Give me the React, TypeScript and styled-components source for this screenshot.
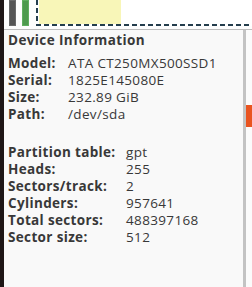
import React from "react";
import styled, { createGlobalStyle } from "styled-components";

const Global = createGlobalStyle`
  html, body { margin: 0; padding: 0; background: #1e1616; }
  body { width: 252px; height: 287px; overflow: hidden; }
`;

const Frame = styled.div`
  display: flex;
  width: 252px;
  height: 287px;
  background: #1e1616;
  font-family: "Open Sans", "Liberation Sans", sans-serif;
  color: #383838;
`;

const DarkEdge = styled.div`
  width: 4px;
  flex: none;
  background: #1e1616;
`;

const Main = styled.div`
  flex: 1;
  display: flex;
  flex-direction: column;
  min-width: 0;
`;

const TopStrip = styled.div`
  height: 30px;
  flex: none;
  display: flex;
  align-items: flex-start;
  background: #fdfdfd;
  border-bottom: 1px solid #bdbdbd;
  padding-left: 5px;
  gap: 6px;
  box-sizing: border-box;
`;

const Bar = styled.div<{ $fill: string; $edge: string }>`
  width: 7px;
  height: 26px;
  box-sizing: border-box;
  background: ${(p) => p.$fill};
  border: 1px solid ${(p) => p.$edge};
  flex: none;
`;

const DashedBox = styled.div`
  flex: 1;
  height: 26px;
  margin-left: 1px;
  display: flex;
  flex-direction: column;
  background: #ffffff;
`;

const BoxInner = styled.div`
  flex: 1;
  display: flex;
  gap: 1px;
`;

const DashV = styled.div`
  width: 2px;
  flex: none;
  background-color: #ffffff;
  background-image: linear-gradient(to bottom, #233d4c 0 5px, #ffffff 5px 8px);
  background-size: 2px 8px;
  background-repeat: repeat-y;
`;

const DashH = styled.div`
  height: 2px;
  flex: none;
  background-color: #ffffff;
  background-image: linear-gradient(to right, #233d4c 0 5px, #ffffff 5px 8px);
  background-size: 8px 2px;
  background-repeat: repeat-x;
`;

const UsedFill = styled.div`
  width: 82px;
  background: #f8f6b8;
`;

const Body = styled.div`
  flex: 1;
  display: flex;
  min-height: 0;
`;

const Panel = styled.div`
  flex: 1;
  background: #f9f9f9;
  border-right: 3px solid #c3c3c3;
  padding: 2px 0 0 4px;
  box-sizing: border-box;
  display: flex;
  flex-direction: column;
`;

const Side = styled.div`
  width: 6px;
  flex: none;
  background: #fbfbfb;
  display: flex;
  flex-direction: column;
  padding-top: 75px;
`;

const Marker = styled.div`
  height: 22px;
  background: #e95420;
`;

const Heading = styled.div`
  font-weight: 700;
  font-size: 13.5px;
  letter-spacing: 0.4px;
  line-height: 17px;
  white-space: nowrap;
  margin-bottom: 5.5px;
`;

const InfoGrid = styled.div<{ $labelWidth: number; $mt: number }>`
  display: grid;
  grid-template-columns: ${(p) => p.$labelWidth}px auto;
  font-size: 13.5px;
  letter-spacing: 0.35px;
  line-height: 17px;
  margin-top: ${(p) => p.$mt}px;
  white-space: nowrap;
`;

const Label = styled.div`
  font-weight: 700;
`;

const Value = styled.div`
  font-weight: 400;
`;

const deviceRows: [string, string][] = [
  ["Model:", "ATA CT250MX500SSD1"],
  ["Serial:", "1825E145080E"],
  ["Size:", "232.89 GiB"],
  ["Path:", "/dev/sda"],
];

const geometryRows: [string, string][] = [
  ["Partition table:", "gpt"],
  ["Heads:", "255"],
  ["Sectors/track:", "2"],
  ["Cylinders:", "957641"],
  ["Total sectors:", "488397168"],
  ["Sector size:", "512"],
];

export default function App() {
  return (
    <>
      <Global />
      <Frame>
        <DarkEdge />
        <Main>
          <TopStrip>
            <Bar $fill="#555555" $edge="#6a6a6a" />
            <Bar $fill="#4e9a4e" $edge="#5fae5f" />
            <DashedBox>
              <BoxInner>
                <DashV />
                <UsedFill />
              </BoxInner>
              <DashH />
            </DashedBox>
          </TopStrip>
          <Body>
            <Panel>
              <Heading>Device Information</Heading>
              <InfoGrid $labelWidth={60} $mt={0}>
                {deviceRows.map(([l, v]) => (
                  <React.Fragment key={l}>
                    <Label>{l}</Label>
                    <Value>{v}</Value>
                  </React.Fragment>
                ))}
              </InfoGrid>
              <InfoGrid $labelWidth={118} $mt={21.5}>
                {geometryRows.map(([l, v]) => (
                  <React.Fragment key={l}>
                    <Label>{l}</Label>
                    <Value>{v}</Value>
                  </React.Fragment>
                ))}
              </InfoGrid>
            </Panel>
            <Side>
              <Marker />
            </Side>
          </Body>
        </Main>
      </Frame>
    </>
  );
}
